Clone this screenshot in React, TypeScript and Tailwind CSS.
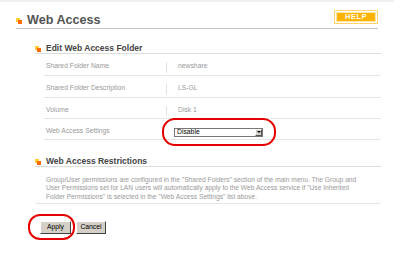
import React from "react";

function Bullet() {
  return (
    <div className="relative w-[6px] h-[6px] shrink-0">
      <div className="absolute left-0 top-0 w-[4px] h-[4px] bg-[#ffcc33]" />
      <div className="absolute left-[2px] top-[2px] w-[4px] h-[4px] bg-[#ff6a00]" />
    </div>
  );
}

function Row({ label, children, h, pt }: { label: string; children: React.ReactNode; h: string; pt: string }) {
  return (
    <div className={`flex ${h} border-b border-[#e6e6e6]`}>
      <div className={`w-[122px] pl-[2px] flex items-center ${pt} text-[6.8px] leading-[8px] text-[#999]`}>{label}</div>
      <div className="w-px bg-[#e2e2e2] mt-[8px] mb-[2px]" />
      <div className={`pl-[11px] flex items-center ${pt} text-[6.8px] leading-[8px] text-[#9a9a9a]`}>{children}</div>
    </div>
  );
}

export default function App() {
  return (
    <div className="w-[414px] h-[258px] bg-white overflow-hidden relative font-['Liberation_Sans',Arial,sans-serif]">
      <div className="h-[2px] w-[394px] bg-[#f0f0f0]" />
      {/* Title */}
      <div className="ml-[16px] w-[362px] h-[27px] flex items-end justify-between border-b border-[#c4c4c4]">
        <div className="flex items-center gap-[5px] pb-[1px]">
          <Bullet />
          <span className="text-[12.6px] leading-[13px] font-bold text-[#555]">Web Access</span>
        </div>
        <div className="mb-[4px] w-[44px] h-[14px] border border-[#ffd470] p-px">
          <div className="w-full h-full bg-[#ffb400] border border-[#ffe9a8] flex items-center justify-center text-white text-[7.5px] font-bold leading-none tracking-[0.5px]">
            HELP
          </div>
        </div>
      </div>

      {/* Section 1 */}
      <div className="ml-[35px] w-[346px]">
        <div className="h-[25px] flex items-end border-b border-[#dddddd]">
          <div className="flex items-center gap-[5px]">
            <Bullet />
            <span className="text-[8.5px] leading-[9px] font-bold text-[#444]">Edit Web Access Folder</span>
          </div>
        </div>
        <div className="ml-[9px]">
          <Row label="Shared Folder Name" h="h-[22px]" pt="pt-[3px]">newshare</Row>
          <Row label="Shared Folder Description" h="h-[22px]" pt="pt-[3px]">LS-GL</Row>
          <Row label="Volume" h="h-[21px]" pt="pt-[3px]">Disk 1</Row>
          <div className="flex h-[21px] border-b border-[#e6e6e6]">
            <div className="w-[122px] pl-[2px] flex items-center pt-[3px] text-[6.8px] leading-[8px] text-[#999]">Web Access Settings</div>
            <div className="w-px" />
            <div className="pl-[7px] flex items-center pt-[6px]">
              <div className="relative">
                <div className="w-[89px] h-[9px] border border-[#777] bg-white flex items-center justify-between">
                  <span className="pl-[2px] text-[6.8px] leading-[8px] text-black">Disable</span>
                  <div className="w-[7px] h-[7px] bg-[#d4d0c8] border-t border-l border-t-white border-l-white border-b border-r border-b-[#555] border-r-[#555] flex items-center justify-center">
                    <div className="w-0 h-0 border-l-[2px] border-r-[2px] border-t-[2px] border-l-transparent border-r-transparent border-t-black" />
                  </div>
                </div>
                <div className="absolute left-[-12px] right-[-13px] top-[-10px] bottom-[-9px] border-[2.5px] border-[#e60000] rounded-[13px]" />
              </div>
            </div>
          </div>
        </div>

        {/* Section 2 */}
        <div className="h-[27px] flex items-end border-b border-[#dddddd]">
          <div className="flex items-center gap-[5px]">
            <Bullet />
            <span className="text-[8.5px] leading-[9px] font-bold text-[#444]">Web Access Restrictions</span>
          </div>
        </div>
        <div className="pl-[11px] pt-[9px] pb-[2px] border-b border-[#e6e6e6] text-[6.65px] leading-[8.4px] text-[#999] whitespace-nowrap">
          Group/User permissions are configured in the "Shared Folders" section of the main menu. The Group and
          <br />
          User Permissions set for LAN users will automatically apply to the Web Access service if "Use Inherited
          <br />
          Folder Permissions" is selected in the "Web Access Settings" list above.
        </div>
      </div>

      {/* Buttons */}
      <div className="ml-[40px] mt-[17px] flex gap-[5px]">
        <div className="relative">
          <button className="w-[31px] h-[13px] bg-[#d4d0c8] border border-t-white border-l-white border-b-[#404040] border-r-[#404040] text-[6.8px] leading-none text-black flex items-center justify-center">
            Apply
          </button>
          <div className="absolute left-[-12px] right-[-4px] top-[-7px] bottom-[-6px] border-[2.5px] border-[#e60000] rounded-[12px]" />
        </div>
        <button className="w-[30px] h-[13px] bg-[#d4d0c8] border border-t-white border-l-white border-b-[#404040] border-r-[#404040] text-[6.8px] leading-none text-black flex items-center justify-center">
          Cancel
        </button>
      </div>
    </div>
  );
}
